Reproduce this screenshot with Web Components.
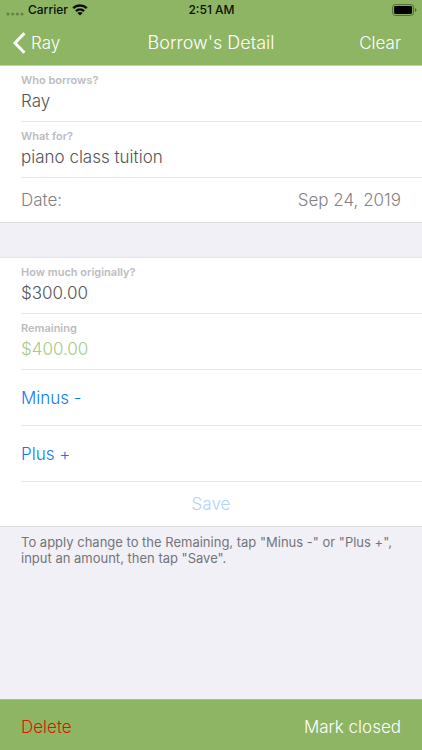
<!DOCTYPE html>
<html lang="en">
<head>
<meta charset="utf-8">
<meta name="viewport" content="width=device-width, initial-scale=1">
<title>Borrow's Detail</title>
<style>
html, body { height: 100%; }
body { margin: 0; font-family: Inter, "Liberation Sans", sans-serif; }
</style>
</head>
<body>
<borrow-screen></borrow-screen>
<script>
const define = (name, html, setup) => {
  const template = document.createElement('template');
  template.innerHTML = html;
  customElements.define(name, class extends HTMLElement {
    constructor() {
      super();
      this.attachShadow({ mode: 'open' }).append(template.content.cloneNode(true));
    }
    connectedCallback() { if (setup) setup(this, this.shadowRoot); }
  });
};

define('status-bar', `
<style>
:host { display: grid; grid-template-columns: 1fr auto 1fr; align-items: center; height: 20px; padding: 0 5px 0 6px; color: #0b0f07; font-size: 12px; font-weight: 500; line-height: 20px; }
.left { display: flex; align-items: center; gap: 4px; }
.right { display: flex; justify-content: flex-end; }
svg { display: block; }
</style>
<div class="left">
  <svg width="18" height="12" viewBox="0 0 18 12" fill="#668345"><circle cx="2" cy="10" r="1.6"/><circle cx="6.7" cy="10" r="1.6"/><circle cx="11.4" cy="10" r="1.6"/><circle cx="16" cy="10" r="1.6"/></svg>
  <span>Carrier</span>
  <svg width="16" height="12" viewBox="0 0 16 12" fill="none" stroke="#0b0f07" stroke-width="2.4"><path d="M1.200 4.200C5 .5 11 .5 14.800 4.200"/><path d="M3.900 7.200C6.300 5 9.700 5 12.100 7.200"/><path d="M8 11.600L5.400 9C6.800 7.700 9.200 7.700 10.600 9Z" fill="#0b0f07" stroke="none"/></svg>
</div>
<span>2:51 AM</span>
<div class="right">
  <svg width="25" height="12" viewBox="0 0 25 12"><rect x=".6" y=".6" width="21" height="10.800" rx="2.800" fill="none" stroke="#4f6a35"/><rect x="2.100" y="2.100" width="18" height="7.800" rx="1.400" fill="#000"/><path d="M23 4q1.500.6 1.500 2T23 8Z" fill="#4f6a35"/></svg>
</div>`);

define('nav-bar', `
<style>
:host { display: grid; grid-template-columns: 1fr auto 1fr; align-items: center; height: 45px; padding: 0 12px; color: #fff; }
h1 { margin: 0; font-size: 18px; font-weight: 300; line-height: 24px; }
.action { padding-right: 9px; }
</style>
<slot name="back"></slot><h1><slot></slot></h1><div class="action"><slot name="action"></slot></div>`);

define('text-button', `
<style>
:host { display: flex; }
:host([align="end"]) { justify-content: flex-end; }
:host([align="center"]) { justify-content: center; }
button { display: flex; align-items: center; gap: 5px; margin: 0; padding: 0; border: 0; background: none; color: inherit; font: inherit; font-size: 17px; font-weight: 350; line-height: 24px; cursor: pointer; }
button:disabled { cursor: default; }
</style>
<button type="button"><slot name="icon"></slot><slot></slot></button>`,
(host, root) => { root.querySelector('button').disabled = host.hasAttribute('disabled'); });

define('form-group', `
<style>
:host { display: block; background: #fff; border-top: 1px solid #e4e4e8; border-bottom: 1px solid #dcdce0; }
:host([first]) { border-top-color: #c3d3b3; }
</style><slot></slot>`);

define('form-row', `
<style>
:host { display: flex; flex-direction: column; justify-content: center; box-sizing: border-box; height: 56px; margin-left: 21px; padding-right: 21px; border-bottom: 1px solid #e8e8ea; }
:host([last]) { height: 44px; border-bottom: 0; }
:host([action]) { color: #0f7af0; }
:host([centered]) { margin-left: 0; padding-right: 0; color: #b0d4fa; }
</style><slot></slot>`);

define('text-field', `
<style>
:host { display: flex; flex-direction: column; gap: 1px; padding-bottom: 2px; color: #545456; }
:host([positive]) { color: #a8c987; }
label { color: #bcbcc1; font-size: 11px; font-weight: 600; line-height: 16px; }
input { width: 100%; height: 24px; margin: 0; padding: 0; border: 0; outline: 0; background: none; color: inherit; font: inherit; font-size: 17px; font-weight: 350; line-height: 24px; }
</style>
<label for="field"></label><input id="field" type="text">`,
(host, root) => {
  root.querySelector('label').textContent = host.getAttribute('label');
  root.querySelector('input').value = host.getAttribute('value');
});

define('date-field', `
<style>
:host { display: flex; align-items: center; justify-content: space-between; color: #828284; font-size: 17px; font-weight: 350; line-height: 24px; }
button { margin: 0; padding: 0; border: 0; background: none; color: inherit; font: inherit; }
</style>
<label for="date">Date:</label><button id="date" type="button"><slot></slot></button>`);

define('borrow-screen', `
<style>
:host { display: flex; flex-direction: column; min-height: 100%; background: #f1f0f7; }
header { background: #8eb564; }
main { display: flex; flex: 1; flex-direction: column; }
.second { margin-top: 34px; }
p { margin: 0; padding: 7px 21px; color: #747479; font-size: 13px; line-height: 16px; }
footer { display: flex; align-items: center; justify-content: space-between; height: 51px; padding: 4px 21px 0; box-sizing: border-box; border-top: 1px solid #a9bd94; background: #8eb564; color: #fff; }
.delete { color: #e01400; }
svg { display: block; }
</style>
<header>
  <status-bar></status-bar>
  <nav-bar>
    <text-button slot="back"><svg slot="icon" width="14" height="22" viewBox="0 0 14 22" fill="none" stroke="#fff" stroke-width="3"><path d="M12.400 1.200L3 11L12.400 20.800"/></svg>Ray</text-button>
    Borrow's Detail
    <text-button slot="action" align="end">Clear</text-button>
  </nav-bar>
</header>
<main>
  <form-group first>
    <form-row><text-field label="Who borrows?" value="Ray"></text-field></form-row>
    <form-row><text-field label="What for?" value="piano class tuition"></text-field></form-row>
    <form-row last><date-field>Sep 24, 2019</date-field></form-row>
  </form-group>
  <form-group class="second">
    <form-row><text-field label="How much originally?" value="$300.00"></text-field></form-row>
    <form-row><text-field label="Remaining" value="$400.00" positive></text-field></form-row>
    <form-row action><text-button>Minus -</text-button></form-row>
    <form-row action><text-button>Plus +</text-button></form-row>
    <form-row last centered><text-button align="center" disabled>Save</text-button></form-row>
  </form-group>
  <p>To apply change to the Remaining, tap "Minus -" or "Plus +", input an amount, then tap "Save".</p>
</main>
<footer>
  <text-button class="delete">Delete</text-button>
  <text-button>Mark closed</text-button>
</footer>`);
</script>
</body>
</html>
